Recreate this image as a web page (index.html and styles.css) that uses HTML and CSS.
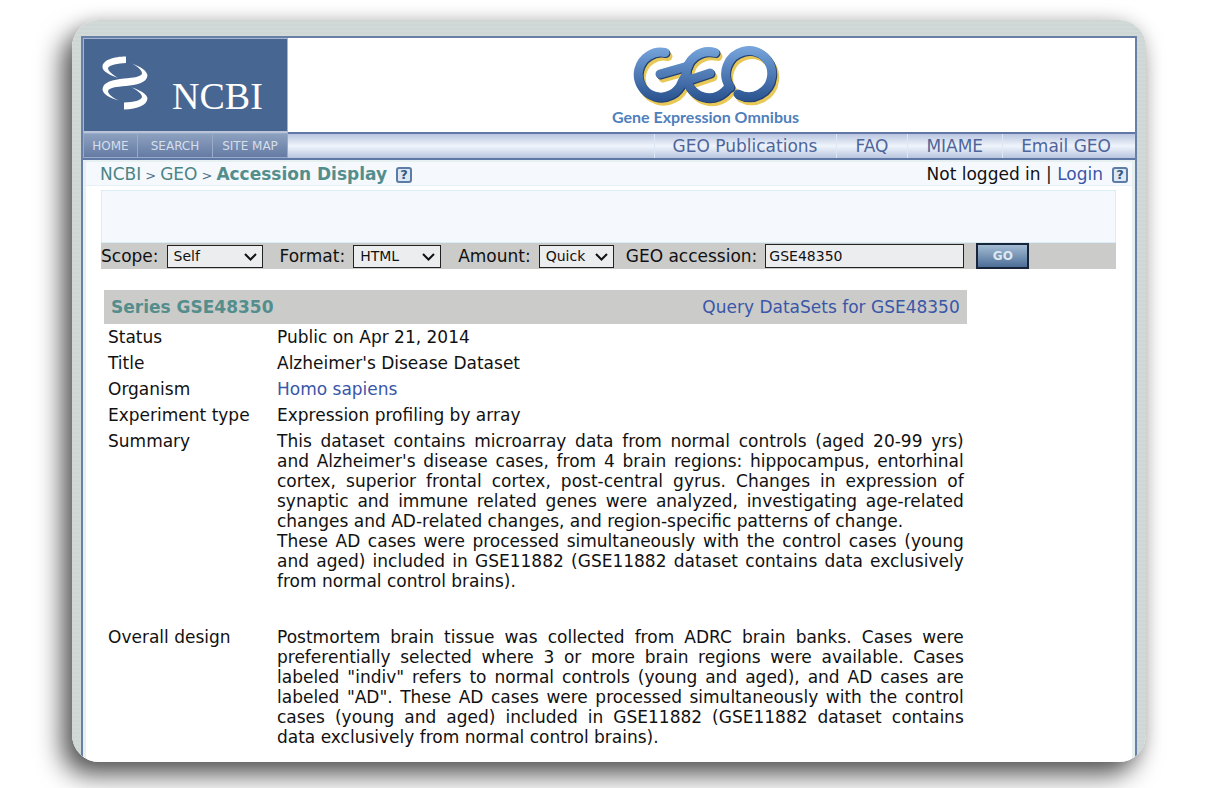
FILE: index.html
```html
<!DOCTYPE html>
<html lang="en">
<head>
<meta charset="utf-8">
<title>GEO Accession Display</title>
<link rel="stylesheet" href="styles.css">
</head>
<body>
<div class="card">
  <div class="panel">
    <header class="header">
      <a class="ncbi" href="#" aria-label="NCBI">
        <svg class="helix" viewBox="0 0 46 54" aria-hidden="true">
          <path d="M24 0.500V7C16 7.500 7 9 6 12C6 15 11 19 16 22C8 19 0.500 15.500 0.500 11C0.500 4 12 0.500 24 0.500Z"/>
          <path d="M30 7.500C38 10.500 45 14.500 45.500 19.500C45 27 34 29 24 30C14 31 7 31.500 6 35C6 38 11 42 17 44.500C8 42 1 38.500 0.500 33.500C1 25.500 11 24 22 22.500C32 21.500 39 21 40 17.500C40 14 36 11 30 7.500Z"/>
          <path d="M30 31.500C38 34 45 38 45.500 42.500C45 49 36 53 22 53.500V46.500C32 46 39 44.500 40 41C40 38 36 35 30 31.500Z"/>
        </svg>
        <span class="ncbi-name">NCBI</span>
      </a>
      <div class="brand">
        <svg class="geo-logo" viewBox="0 0 148 62" aria-hidden="true">
          <defs>
            <linearGradient id="blue" gradientUnits="userSpaceOnUse" x1="0" y1="2" x2="0" y2="56">
              <stop offset="0" stop-color="#75a3da"/>
              <stop offset="1" stop-color="#28518e"/>
            </linearGradient>
            <g id="geo" fill="none" stroke-width="9" stroke-linecap="round" stroke-linejoin="round">
              <path d="M33 6.500A22.500 22.500 0 1 0 50 36L54 29"/>
              <path d="M28 28L56 20"/>
              <path d="M83 6.500A23 23 0 0 0 54 29A23 23 0 0 0 97 40"/>
              <path d="M98 41A23 23 0 1 1 106 48"/>
              <path d="M57 34L78 27"/>
            </g>
          </defs>
          <use href="#geo" stroke="#e8c957" transform="translate(3 4)"/>
          <use href="#geo" stroke="#233f6f" transform="translate(1 1)"/>
          <use href="#geo" stroke="url(#blue)"/>
        </svg>
        <span class="brand-name">Gene Expression Omnibus</span>
      </div>
      <nav class="site-nav">
        <a href="#">HOME</a><a href="#">SEARCH</a><a href="#">SITE MAP</a>
      </nav>
      <nav class="geo-nav">
        <a href="#">GEO Publications</a><a href="#">FAQ</a><a href="#">MIAME</a><a href="#">Email GEO</a>
      </nav>
    </header>
    <div class="body">
      <div class="crumbs">
        <div class="path"><a href="#">NCBI</a><small>&gt;</small><a href="#">GEO</a><small>&gt;</small><b>Accession Display</b><button class="help" type="button" aria-label="Help on this page">?</button></div>
        <div class="login">Not logged in | <a href="#">Login</a><button class="help" type="button" aria-label="Help on login">?</button></div>
      </div>
      <main class="content">
        <div class="notice"></div>
        <form class="query">
          <label for="scope">Scope:</label>
          <span class="pick scope"><select id="scope"><option>Self</option></select><svg viewBox="0 0 13 8" aria-hidden="true"><path d="M1 1l5.500 5.500L12 1"/></svg></span>
          <label for="format">Format:</label>
          <span class="pick format"><select id="format"><option>HTML</option></select><svg viewBox="0 0 13 8" aria-hidden="true"><path d="M1 1l5.500 5.500L12 1"/></svg></span>
          <label for="amount">Amount:</label>
          <span class="pick amount"><select id="amount"><option>Quick</option></select><svg viewBox="0 0 13 8" aria-hidden="true"><path d="M1 1l5.500 5.500L12 1"/></svg></span>
          <label for="acc">GEO accession:</label>
          <input id="acc" type="text" value="GSE48350">
          <button class="go" type="button">GO</button>
        </form>
        <section class="record">
          <div class="record-head">
            <b>Series GSE48350</b>
            <a href="#">Query DataSets for GSE48350</a>
          </div>
          <table class="fields">
            <tr><th scope="row">Status</th><td>Public on Apr 21, 2014</td></tr>
            <tr><th scope="row">Title</th><td>Alzheimer's Disease Dataset</td></tr>
            <tr><th scope="row">Organism</th><td><a href="#">Homo sapiens</a></td></tr>
            <tr><th scope="row">Experiment type</th><td>Expression profiling by array</td></tr>
            <tr class="long"><th scope="row">Summary</th><td>This dataset contains microarray data from normal controls (aged 20-99 yrs) and Alzheimer's disease cases, from 4 brain regions: hippocampus, entorhinal cortex, superior frontal cortex, post-central gyrus. Changes in expression of synaptic and immune related genes were analyzed, investigating age-related changes and AD-related changes, and region-specific patterns of change.<br>These AD cases were processed simultaneously with the control cases (young and aged) included in GSE11882 (GSE11882 dataset contains data exclusively from normal control brains).</td></tr>
            <tr><th scope="row">Overall design</th><td>Postmortem brain tissue was collected from ADRC brain banks. Cases were preferentially selected where 3 or more brain regions were available. Cases labeled "indiv" refers to normal controls (young and aged), and AD cases are labeled "AD". These AD cases were processed simultaneously with the control cases (young and aged) included in GSE11882 (GSE11882 dataset contains data exclusively from normal control brains).</td></tr>
          </table>
        </section>
      </main>
    </div>
  </div>
</div>
</body>
</html>
```
FILE: styles.css
```css
* { box-sizing: border-box; }

body {
  margin: 0;
  background: #fff;
  color: #111;
  font: 17px/20px "DejaVu Sans", Verdana, sans-serif;
}

a { color: #3a56a8; text-decoration: none; }

button, select, input { font-family: inherit; margin: 0; }

.card {
  margin: 20px 61px 27px 72px;
  padding: 16px 9px 0;
  border-radius: 27px;
  overflow: hidden;
  background: repeating-linear-gradient(#ced7d5 0 2px, #d2dad8 2px 4px);
  box-shadow: -10px 13px 26px rgba(0, 0, 0, 0.65), 0 0 18px rgba(0, 0, 0, 0.12);
}

.panel {
  border: 2px solid #6880a8;
  border-bottom: 0;
  background: #fff;
}

.header {
  display: grid;
  grid-template-columns: 205px 1fr;
  grid-template-rows: 95px 25px;
  border-bottom: 2px solid #6078a6;
}

.ncbi {
  display: flex;
  align-items: flex-start;
  gap: 24px;
  padding: 17px 0 0 18px;
  border: 1px solid #a5b4cf;
  border-bottom: 2px solid #b9c4d8;
  background: #486692;
  color: #fff;
}

.helix { width: 46px; height: 54px; fill: #fff; }

.ncbi-name {
  padding-top: 20px;
  font: 38px/40px "Liberation Serif", serif;
}

.brand {
  display: flex;
  flex-direction: column;
  align-items: center;
  padding: 8px 12px 0 0;
  border-bottom: 1px solid #6078a6;
}

.geo-logo { width: 148px; height: 62px; }

.brand-name {
  color: #4f80bb;
  font: bold 16px/18px Lato, sans-serif;
}

.site-nav {
  display: flex;
  border: 1px solid #9aabca;
  background: linear-gradient(#8ca0bf, #657ba3);
  font-size: 12px;
}

.site-nav a {
  display: flex;
  align-items: center;
  justify-content: center;
  flex: 1 1 75px;
  color: #d5deeb;
}

.site-nav a:first-child { flex: 0 0 53px; }
.site-nav a + a { border-left: 1px solid #9aabca; }

.geo-nav {
  display: flex;
  justify-content: flex-end;
  padding-right: 5px;
  border-top: 1px solid #6078a6;
  background: linear-gradient(#b9c5df, #f0f5fc 50%, #b9c5df);
}

.geo-nav a {
  padding: 2px 19px 0 18px;
  border-left: 1px solid #dde7f5;
  color: #4e659b;
}

.body {
  border: 3px solid #e6f0f1;
  border-top-width: 2px;
  border-bottom: 0;
  padding-bottom: 12px;
}

.crumbs {
  display: flex;
  justify-content: space-between;
  height: 24px;
  padding: 2px 4px 0 14px;
  border-bottom: 1px solid #e6f0f5;
  background: #f5f9fe;
}

.path, .path a { color: #4b8485; }
.path small { margin: 0 4px; font-size: 13px; color: #4f6d88; }
.path b, .record-head b { color: #548e8c; }
.login { color: #111; }

.help {
  width: 16px;
  height: 16px;
  margin-left: 9px;
  padding: 0;
  border: 2px solid #5c7ba5;
  border-radius: 3px;
  background: #dce8f3;
  color: #36587f;
  font-size: 13px;
  font-weight: bold;
  line-height: 12px;
  vertical-align: 1px;
}

.content { padding: 4px 16px 0 15px; }

.notice {
  height: 53px;
  border: 1px solid #d9edf8;
  background: #f5f9fe;
}

.query {
  display: flex;
  align-items: center;
  height: 26px;
  background: #cbcbca;
}

.query label { white-space: nowrap; }

.pick { position: relative; display: block; margin: 0 17px 0 8px; }
.pick select {
  appearance: none;
  width: 100%;
  height: 23px;
  padding: 0 6px;
  border: 1px solid #222;
  border-radius: 0;
  background: #ecedef;
  color: #111;
  font-size: 14px;
}
.pick svg {
  position: absolute;
  right: 6px;
  top: 8px;
  width: 13px;
  height: 8px;
  fill: none;
  stroke: #111;
  stroke-width: 2;
  pointer-events: none;
}
.scope { width: 96px; }
.format { width: 88px; }
.amount { width: 75px; margin-right: 12px; }

.query input {
  width: 199px;
  height: 24px;
  margin: 0 12px 0 8px;
  padding: 0 3px;
  border: 1px solid #222;
  background: #ecedef;
  color: #111;
  font-size: 14px;
}

.go {
  width: 53px;
  height: 26px;
  border: 2px solid #182538;
  background: linear-gradient(#a2bcd3, #4e6e98);
  color: #dde7f0;
  font-size: 12px;
  font-weight: bold;
}

.record { width: 85%; margin: 21px 0 0 3px; }

.record-head {
  display: flex;
  justify-content: space-between;
  padding: 7px;
  background: #cbcbca;
}

.fields { width: 100%; border-spacing: 0; }
.fields th, .fields td {
  padding: 3px;
  vertical-align: top;
  text-align: left;
  font-weight: normal;
}
.fields th { width: 170px; padding-left: 4px; white-space: nowrap; }
.fields td { text-align: justify; }
.fields .long td { padding-bottom: 33px; }
```
